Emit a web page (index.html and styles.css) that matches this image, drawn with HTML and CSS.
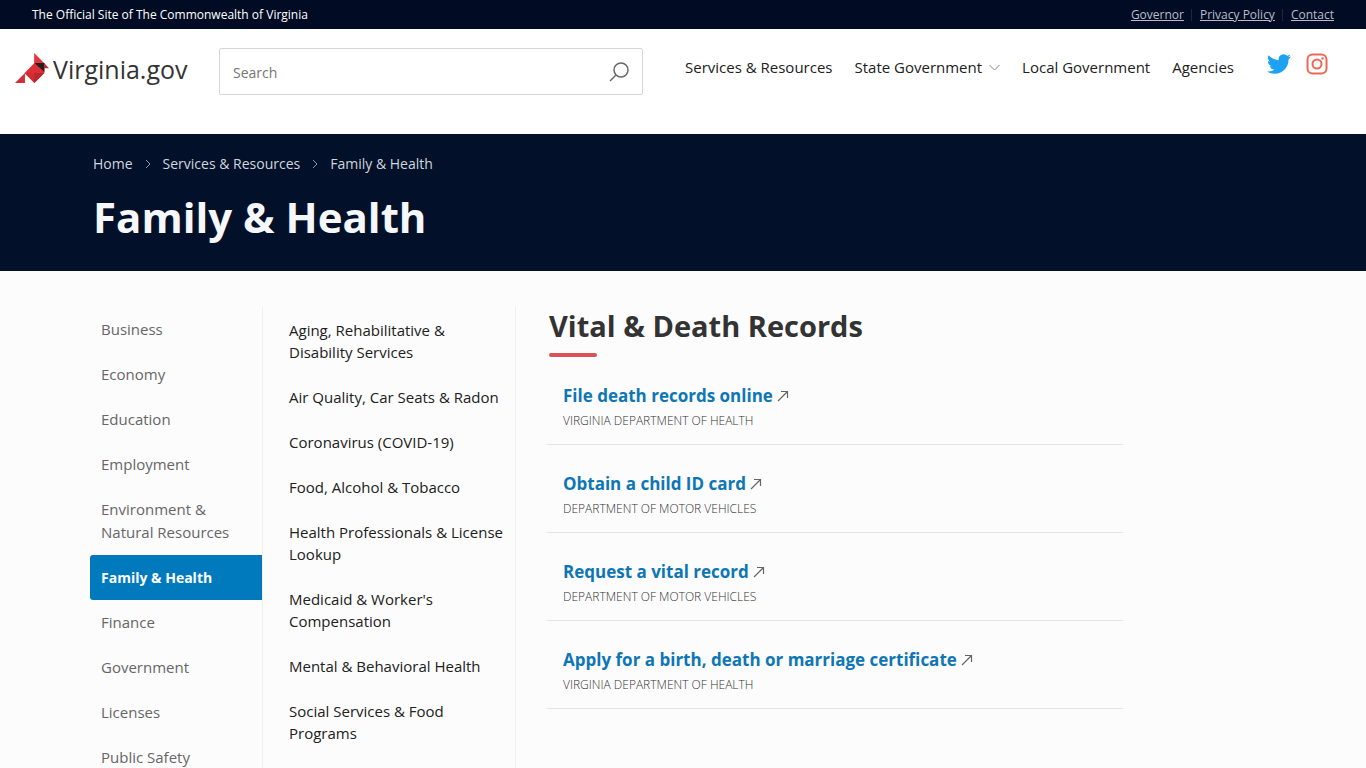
FILE: index.html
```html
<!DOCTYPE html>
<html lang="en">
<head>
    <meta charset="UTF-8">
    <meta name="viewport" content="width=device-width, initial-scale=1.0">
    <title>Family &amp; Health | Virginia.gov</title>
    <link rel="stylesheet" href="styles.css">
</head>
<body>
    <!-- Shared icons -->
    <svg class="sprite" aria-hidden="true">
        <symbol id="icon-external" viewBox="0 0 12 12">
            <path d="M1 11L10.500 1.500M4 1.500h6.500v6.500" fill="none" stroke="#666" stroke-width="1.200"/>
        </symbol>
        <symbol id="icon-next" viewBox="0 0 6 10">
            <path d="M1 1l4 4-4 4" fill="none" stroke="#8d96a8" stroke-width="1"/>
        </symbol>
    </svg>

    <div class="topbar">
        <span>The Official Site of The Commonwealth of Virginia</span>
        <ul class="topbar-links">
            <li><a href="#">Governor</a></li>
            <li><a href="#">Privacy Policy</a></li>
            <li><a href="#">Contact</a></li>
        </ul>
    </div>

    <header class="header">
        <a class="logo" href="#">
            <svg class="logo-mark" viewBox="45 158 103 91" aria-hidden="true">
                <path d="M103 158l31 31h-31z" fill="#e8353b"/>
                <path d="M104 188L74 219l30 30 30-30v-31z" fill="#dc3036"/>
                <path d="M74 219h30v30z" fill="#d32c33"/>
                <path d="M103 219h31l-31 30z" fill="#b92a2e"/>
                <path d="M75 219v30H45z" fill="#d22f35"/>
                <path d="M104 188h30v28z" fill="#231f20"/>
                <path d="M133 188l15 16h-15z" fill="#c62b30"/>
            </svg>
            <span>Virginia.gov</span>
        </a>
        <form class="search" role="search">
            <input class="search-input" type="search" placeholder="Search" aria-label="Search">
            <button class="search-button" type="button" aria-label="Submit search">
                <svg width="20" height="20" viewBox="0 0 20 20" fill="none" stroke="#666" stroke-width="1.500" aria-hidden="true">
                    <circle cx="12" cy="8" r="7"/>
                    <path d="M7 13L1 19"/>
                </svg>
            </button>
        </form>
        <nav class="nav" aria-label="Main">
            <a href="#">Services &amp; Resources</a>
            <button class="nav-toggle" type="button">State Government
                <svg width="11" height="7" viewBox="0 0 11 7" fill="none" stroke="#888" aria-hidden="true"><path d="M.500 1l5 5 5-5"/></svg>
            </button>
            <a href="#">Local Government</a>
            <a href="#">Agencies</a>
        </nav>
        <div class="social">
            <a href="#" aria-label="Twitter">
                <svg width="24" height="24" viewBox="0 0 24 24" fill="#1da1f2" aria-hidden="true">
                    <path d="M23.953 4.570a10 10 0 01-2.825.775 4.958 4.958 0 002.163-2.723c-.951.555-2.005.959-3.127 1.184a4.920 4.920 0 00-8.384 4.482C7.690 8.095 4.067 6.130 1.640 3.162a4.822 4.822 0 00-.666 2.475c0 1.710.870 3.213 2.188 4.096a4.904 4.904 0 01-2.228-.616v.060a4.923 4.923 0 003.946 4.827 4.996 4.996 0 01-2.212.085 4.936 4.936 0 004.604 3.417 9.867 9.867 0 01-6.102 2.105c-.390 0-.779-.023-1.170-.067a13.995 13.995 0 007.557 2.209c9.053 0 13.998-7.496 13.998-13.985 0-.210 0-.420-.015-.630A9.935 9.935 0 0024 4.590z"/>
                </svg>
            </a>
            <a href="#" aria-label="Instagram">
                <svg width="22" height="22" viewBox="0 0 22 22" fill="none" stroke="#ef6656" stroke-width="2" aria-hidden="true">
                    <rect x="1.500" y="1.500" width="19" height="19" rx="5"/>
                    <circle cx="11" cy="11" r="4.500"/>
                    <circle cx="16.500" cy="5.500" r="1.200" fill="#ef6656" stroke="none"/>
                </svg>
            </a>
        </div>
    </header>

    <section class="hero">
        <div class="container">
            <nav class="breadcrumb" aria-label="Breadcrumb">
                <a href="#">Home</a>
                <svg width="6" height="10" aria-hidden="true"><use href="#icon-next"/></svg>
                <a href="#">Services &amp; Resources</a>
                <svg width="6" height="10" aria-hidden="true"><use href="#icon-next"/></svg>
                <a href="#">Family &amp; Health</a>
            </nav>
            <h1>Family &amp; Health</h1>
        </div>
    </section>

    <main class="container content">
        <nav class="menu categories" aria-label="Categories">
            <a href="#">Business</a>
            <a href="#">Economy</a>
            <a href="#">Education</a>
            <a href="#">Employment</a>
            <a href="#">Environment &amp; Natural Resources</a>
            <a class="active" href="#">Family &amp; Health</a>
            <a href="#">Finance</a>
            <a href="#">Government</a>
            <a href="#">Licenses</a>
            <a href="#">Public Safety</a>
        </nav>
        <nav class="menu topics" aria-label="Topics">
            <a href="#">Aging, Rehabilitative &amp; Disability Services</a>
            <a href="#">Air Quality, Car Seats &amp; Radon</a>
            <a href="#">Coronavirus (COVID-19)</a>
            <a href="#">Food, Alcohol &amp; Tobacco</a>
            <a href="#">Health Professionals &amp; License Lookup</a>
            <a href="#">Medicaid &amp; Worker's Compensation</a>
            <a href="#">Mental &amp; Behavioral Health</a>
            <a href="#">Social Services &amp; Food Programs</a>
        </nav>
        <section class="records">
            <h2>Vital &amp; Death Records</h2>
            <ul class="record-list">
                <li>
                    <a href="#">File death records online <svg width="12" height="12" aria-hidden="true"><use href="#icon-external"/></svg></a>
                    <p>Virginia Department of Health</p>
                </li>
                <li>
                    <a href="#">Obtain a child ID card <svg width="12" height="12" aria-hidden="true"><use href="#icon-external"/></svg></a>
                    <p>Department of Motor Vehicles</p>
                </li>
                <li>
                    <a href="#">Request a vital record <svg width="12" height="12" aria-hidden="true"><use href="#icon-external"/></svg></a>
                    <p>Department of Motor Vehicles</p>
                </li>
                <li>
                    <a href="#">Apply for a birth, death or marriage certificate <svg width="12" height="12" aria-hidden="true"><use href="#icon-external"/></svg></a>
                    <p>Virginia Department of Health</p>
                </li>
            </ul>
        </section>
    </main>
</body>
</html>
```
FILE: styles.css
```css
* {
    box-sizing: border-box;
}
body {
    font-family: 'Segoe UI', 'Open Sans', 'Noto Sans', sans-serif;
    font-size: 15px;
    background: #fcfcfc;
    color: #212121;
    margin: 0;
}
a {
    color: inherit;
    text-decoration: none;
}
ul {
    list-style: none;
    margin: 0;
    padding: 0;
}
.sprite {
    display: none;
}
.topbar {
    background: #010c24;
    color: #fff;
    font-size: 12px;
    line-height: 29px;
    padding: 0 32px;
    display: flex;
    justify-content: space-between;
}
.topbar-links {
    display: flex;
    align-items: center;
    color: #b8bdc8;
    line-height: 12px;
}
.topbar-links li + li {
    border-left: 1px solid #1c2740;
    margin-left: 7px;
    padding-left: 8px;
}
.topbar-links a {
    text-decoration: underline;
}
.header {
    background: #fff;
    padding: 19px 38px 39px 15px;
    display: flex;
    align-items: flex-start;
}
.logo {
    display: flex;
    align-items: center;
    gap: 4px;
    width: 204px;
    height: 42px;
    font-size: 25px;
    color: #333;
}
.logo-mark {
    width: 34px;
    height: 30px;
    margin-bottom: 2px;
}
.search {
    display: flex;
    flex: 1;
    max-width: 424px;
    height: 47px;
    border: 1px solid #d6d6d6;
    border-radius: 2px;
}
.search-input {
    flex: 1;
    min-width: 0;
    border: 0;
    background: none;
    padding: 2px 13px 0;
    font: inherit;
    font-size: 14px;
    color: #333;
}
.search-input::placeholder {
    color: #757575;
}
.search-button {
    border: 0;
    background: none;
    padding: 0 13px;
    display: flex;
    align-items: center;
}
.nav {
    display: flex;
    align-items: center;
    gap: 22px;
    height: 38px;
    margin-left: 42px;
    white-space: nowrap;
}
.nav-toggle {
    display: flex;
    align-items: center;
    gap: 7px;
    border: 0;
    background: none;
    padding: 0;
    font: inherit;
    color: inherit;
}
.social {
    display: flex;
    align-items: center;
    gap: 15px;
    height: 32px;
    margin-left: auto;
}
.social svg {
    display: block;
}
.container {
    max-width: 1186px;
    margin: 0 auto;
}
.hero {
    background: #021029;
    padding: 18px 0 21px;
}
.breadcrumb {
    display: flex;
    align-items: center;
    gap: 12px;
    padding-left: 3px;
    font-size: 14px;
    line-height: 24px;
    color: #d0d5df;
}
.hero h1 {
    margin: 8px 0 0 3px;
    font-size: 42px;
    line-height: 66px;
    font-weight: 700;
    color: #f5f7fb;
}
.content {
    display: flex;
    padding-top: 36px;
}
.menu {
    border-right: 1px solid #f0f0f0;
    padding-bottom: 40px;
}
.menu a {
    display: block;
    line-height: 23px;
    padding: 11px;
}
.categories {
    flex: 0 0 173px;
    color: #666;
}
.categories .active {
    background: #007abd;
    border-radius: 3px 0 0 3px;
    color: #fff;
    font-size: 14px;
    font-weight: 700;
}
.topics {
    flex: 0 0 253px;
    padding-left: 15px;
}
.topics a {
    line-height: 22px;
    padding: 12px 11px 11px;
}
.records {
    flex: 0 1 607px;
    padding-left: 31px;
}
.records h2 {
    margin: 0 0 0 2px;
    font-size: 29px;
    line-height: 38px;
    color: #333;
}
.records h2::after {
    content: "";
    display: block;
    width: 48px;
    height: 4px;
    margin-top: 8px;
    border-radius: 2px;
    background: #da5357;
}
.record-list li {
    border-bottom: 1px solid #e4e4e4;
    padding: 26px 16px 11px;
}
.record-list a {
    display: block;
    font-size: 17px;
    line-height: 26px;
    font-weight: 700;
    color: #0d76b5;
}
.record-list p {
    margin: 0;
    font-size: 12px;
    font-weight: 300;
    line-height: 24px;
    text-transform: uppercase;
    color: #333;
}
```
